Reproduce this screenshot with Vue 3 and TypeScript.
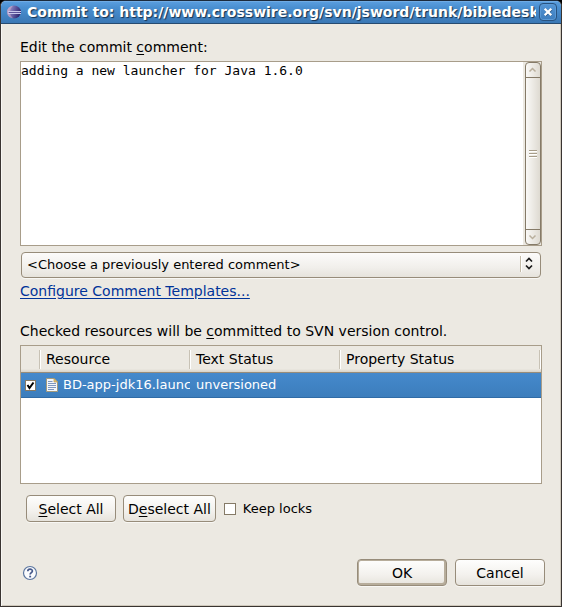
<script setup lang="ts">
import { ref } from 'vue'

interface Resource {
  name: string
  textStatus: string
  propertyStatus: string
  checked: boolean
}

const comment = ref<string>('adding a new launcher for Java 1.6.0')
const previous = ref<string>('')
const keepLocks = ref<boolean>(false)
const resources = ref<Resource[]>([
  { name: 'BD-app-jdk16.launch', textStatus: 'unversioned', propertyStatus: '', checked: true },
])

function setAll(checked: boolean): void {
  resources.value.forEach((r) => (r.checked = checked))
}
</script>

<template>
  <div class="dialog">
    <header class="titlebar">
      <svg class="logo" viewBox="0 0 16 16" aria-hidden="true">
        <defs>
          <linearGradient id="orb" x1="0" y1="0" x2="1" y2="0.3">
            <stop offset="0" stop-color="#c3b0d2" />
            <stop offset="0.5" stop-color="#6f67ab" />
            <stop offset="1" stop-color="#2f2872" />
          </linearGradient>
        </defs>
        <ellipse cx="8" cy="8" rx="7" ry="6.500" fill="url(#orb)" />
        <path d="M1.500 5.500C3 3 5 2 7 1.800C5 3.500 4 6 4 8s.5 4 3 6.200C4 14 2 12.500 1.300 10z" fill="#d5b3cf" opacity=".5" />
        <path d="M2 7.500h13M2 9.500h13" stroke="#c9c8ec" stroke-width="1" />
        <path d="M3 8.500h11" stroke="#5a5298" stroke-width="1" />
      </svg>
      <h1 class="title">Commit to: http://www.crosswire.org/svn/jsword/trunk/bibledesktop</h1>
      <button class="close" type="button" aria-label="Close">
        <svg viewBox="0 0 16 16" aria-hidden="true">
          <path d="M5.500 5.500l6 6M11.500 5.500l-6 6" stroke="#1f4f80" stroke-width="2.400" />
          <path d="M4.700 4.700l6.600 6.600M11.300 4.700l-6.600 6.600" stroke="#fff" stroke-width="2.300" />
        </svg>
      </button>
    </header>

    <main class="content">
      <label class="caption" for="comment">Edit the commit <u>c</u>omment:</label>
      <div class="editor">
        <textarea id="comment" v-model="comment" class="editor-text" spellcheck="false"></textarea>
        <div class="scrollbar" aria-hidden="true">
          <span class="arrow up">
            <svg viewBox="0 0 13 13"><path d="M3.500 8.500l3-3 3 3" /></svg>
          </span>
          <span class="thumb"><i></i><i></i><i></i></span>
          <span class="arrow down">
            <svg viewBox="0 0 13 13"><path d="M3.500 5.500l3 3 3-3" /></svg>
          </span>
        </div>
      </div>

      <div class="combo">
        <select v-model="previous" class="combo-select" aria-label="Previously entered comment">
          <option value="">&lt;Choose a previously entered comment&gt;</option>
        </select>
        <svg class="combo-arrows" viewBox="0 0 18 16" aria-hidden="true">
          <path d="M.5 0v16" stroke="#c3bba9" />
          <path d="M1.500 0v16" stroke="#fff" />
          <path d="M6 5.500l3-3 3 3M6 9.500l3 3 3-3" fill="none" stroke="#1a1a1a" stroke-width="1.700" />
        </svg>
      </div>
      <a class="templates" href="#">Configure Comment Templates...</a>

      <p id="resources-caption" class="caption">Checked resources will be <u>c</u>ommitted to SVN version control.</p>
      <div class="resources">
        <table class="grid" aria-labelledby="resources-caption">
          <colgroup>
            <col class="col-check" />
            <col class="col-status" />
            <col class="col-status" />
            <col />
          </colgroup>
          <thead>
            <tr>
              <th aria-label="Checked"></th>
              <th>Resource</th>
              <th>Text Status</th>
              <th>Property Status</th>
            </tr>
          </thead>
          <tbody>
            <tr v-for="item in resources" :key="item.name">
              <td class="check-cell">
                <span class="tick">
                  <input v-model="item.checked" class="box" type="checkbox" :aria-label="item.name" />
                  <svg v-if="item.checked" class="mark" viewBox="0 0 11 11" aria-hidden="true">
                    <path d="M2.500 5l2 3 4-5.500" fill="none" stroke="#000" stroke-width="2" />
                  </svg>
                </span>
              </td>
              <td>
                <div class="resource">
                  <svg class="file" viewBox="0 0 12 14" aria-hidden="true">
                    <path d="M.5.5h7.500l3.500 3.500v9.500H.5z" fill="#f4f7fb" stroke="#a39a7c" />
                    <path d="M8 .5v3.500h3.500z" fill="#e6c673" stroke="#b99b54" stroke-width=".7" />
                    <path d="M2 3.500h4.500M2 5.500h8M2 7.500h8M2 9.500h8M2 11.500h6" stroke="#7e98bf" />
                  </svg>
                  <span class="name">{{ item.name }}</span>
                </div>
              </td>
              <td>{{ item.textStatus }}</td>
              <td>{{ item.propertyStatus }}</td>
            </tr>
          </tbody>
        </table>
      </div>

      <div class="actions">
        <button class="btn" type="button" @click="setAll(true)"><u>S</u>elect All</button>
        <button class="btn" type="button" @click="setAll(false)">D<u>e</u>select All</button>
        <label class="locks">
          <input v-model="keepLocks" class="box" type="checkbox" />
          <span>Keep locks</span>
        </label>
      </div>
    </main>

    <footer class="footer">
      <button class="help" type="button" aria-label="Help">
        <svg viewBox="0 0 16 16" aria-hidden="true">
          <circle cx="8" cy="8" r="6.500" fill="#fafbfd" stroke="#5b769f" stroke-width="1.200" />
          <path d="M5.800 6.300c0-3 4.600-2.800 4.600-.3C10.400 7.600 8.100 7.700 8.100 9.600" fill="none" stroke="#46598a" stroke-width="1.700" />
          <path d="M7.200 10.700h1.900v1.700H7.200z" fill="#46598a" />
        </svg>
      </button>
      <button class="btn default" type="button">OK</button>
      <button class="btn" type="button">Cancel</button>
    </footer>
  </div>
</template>

<style>
body {
  background: #000;
}
</style>

<style scoped>
.dialog,
.dialog * {
  box-sizing: border-box;
}

.dialog {
  display: flex;
  flex-direction: column;
  min-height: 100vh;
  border: 1px solid #393431;
  border-top-color: #1b2a3c;
  border-radius: 6px 6px 0 0;
  overflow: hidden;
  background: #ece9e2;
  box-shadow: inset 1px 0 #f8f7f4, inset -1px -1px #cfc8bb;
  color: #000;
  font: 14px/16px "DejaVu Sans", sans-serif;
}

.titlebar {
  display: flex;
  align-items: center;
  height: 23px;
  padding: 0 4px 0 5px;
  background: linear-gradient(#5b9fe0, #4a8fd0 30%, #3a78b5);
  border-bottom: 1px solid #274b70;
  box-shadow: inset 0 1px #6fabe4;
}

.logo {
  flex: none;
  width: 16px;
  height: 16px;
}

.title {
  flex: 1;
  min-width: 0;
  margin: 0 3px 0 5px;
  overflow: hidden;
  white-space: nowrap;
  color: #fff;
  font-size: 14px;
  line-height: 20px;
  text-shadow: 1px 1px 1px #16314e;
}

.close {
  flex: none;
  width: 18px;
  height: 18px;
  padding: 0;
  border: 1px solid #28527f;
  border-radius: 4px;
  background: linear-gradient(#5495d5, #3d7dbd);
  box-shadow: inset 0 0 0 1px #5a99d6;
}

.close svg {
  display: block;
  width: 16px;
  height: 16px;
}

.content {
  display: flex;
  flex: 1;
  flex-direction: column;
  padding: 15px 19px 0;
}

.caption {
  margin: 0;
}

u {
  text-decoration: underline;
  text-underline-offset: 2px;
}

.editor {
  display: flex;
  height: 185px;
  margin-top: 6px;
  border: 1px solid #a89d8a;
  background: #ece9e2;
}

.editor-text {
  flex: 1;
  min-width: 0;
  margin: 0 2px 0 0;
  padding: 0;
  border: 0;
  outline: 0;
  resize: none;
  overflow: hidden;
  background: #fff;
  color: #000;
  font: 13px/17px "DejaVu Sans Mono", monospace;
}

.scrollbar {
  display: flex;
  flex-direction: column;
  width: 16px;
  border: 1px solid #857a67;
  border-radius: 4px;
  background: linear-gradient(90deg, #faf9f7, #dedad1);
}

.arrow {
  height: 14px;
}

.arrow svg {
  display: block;
  width: 13px;
  height: 13px;
  fill: none;
  stroke: #b9af9d;
  stroke-width: 1.5;
}

.thumb {
  display: flex;
  flex: 1;
  flex-direction: column;
  align-items: center;
  justify-content: center;
  gap: 2px;
  border: solid #857a67;
  border-width: 1px 0;
}

.thumb i {
  width: 8px;
  height: 1px;
  background: #a79d8a;
  box-shadow: 0 1px #fff;
}

.combo {
  position: relative;
  margin: 6px 1px 0;
}

.combo-select {
  display: block;
  width: 100%;
  height: 26px;
  padding: 0 24px 1px 5px;
  appearance: none;
  border: 1px solid #978c7a;
  border-radius: 4px;
  background: linear-gradient(#fcfbfa, #f1efeb 60%, #e6e3dc);
  box-shadow: 0 1px #f8f7f4;
  color: #000;
  font: inherit;
  font-size: 13px;
}

.combo-arrows {
  position: absolute;
  top: 4px;
  right: 3px;
  width: 18px;
  height: 16px;
  pointer-events: none;
}

.templates {
  align-self: flex-start;
  margin: 5px 0 24px;
  color: #003399;
  text-underline-offset: 2px;
}

.resources {
  height: 139px;
  margin-top: 6px;
  border: 1px solid #a89d8a;
  background: #fff;
}

.grid {
  width: 100%;
  table-layout: fixed;
  border-collapse: separate;
  border-spacing: 0;
}

.col-check {
  width: 20px;
}

.col-status {
  width: 150px;
}

.grid th {
  height: 27px;
  padding: 0 5px;
  background:
    linear-gradient(#c8c2b5, #c8c2b5) right 1px center / 1px 19px no-repeat,
    linear-gradient(#fff, #fff) right center / 1px 19px no-repeat,
    linear-gradient(#ece9e2 88%, #d8d3c8);
  border-bottom: 1px solid #978c7a;
  font-weight: normal;
  text-align: left;
}

.grid td {
  height: 25px;
  padding: 0 1px 0 5px;
  overflow: hidden;
  background: linear-gradient(#4589cc, #3c7dbc);
  border-bottom: 1px solid #2f6ba6;
  color: #fff;
  font-size: 13px;
  white-space: nowrap;
}

.grid .check-cell {
  padding: 0 0 0 4px;
}

.resource {
  display: flex;
  align-items: center;
}

.file {
  flex: none;
  width: 12px;
  height: 14px;
}

.name {
  flex: 1;
  min-width: 0;
  margin-left: 5px;
  overflow: hidden;
}

.box {
  display: block;
  flex: none;
  width: 12px;
  height: 12px;
  margin: 0;
  appearance: none;
  border: 1px solid #857a67;
  background: #fff;
}

.locks .box:checked {
  background: radial-gradient(#000 45%, #fff 50%);
}

.tick {
  display: grid;
  width: 11px;
  height: 11px;
}

.tick .box,
.tick .mark {
  grid-area: 1 / 1;
  width: 11px;
  height: 11px;
}

.mark {
  pointer-events: none;
}

.actions {
  display: flex;
  align-items: center;
  gap: 7px;
  padding: 11px 6px 0;
}

.btn {
  min-width: 90px;
  height: 27px;
  padding: 0 4px;
  border: 1px solid #978c7a;
  border-radius: 4px;
  background: linear-gradient(#fefefd, #f3f1ed 60%, #e6e3dc);
  box-shadow: 0 1px #f8f7f4;
  color: #000;
  font: inherit;
  white-space: nowrap;
}

.btn.default {
  box-shadow: inset 0 0 0 1px #b7ad9b, inset -1px -1px 0 1px #b7ad9b, 0 1px #f8f7f4;
}

.locks {
  display: flex;
  align-items: center;
  gap: 7px;
  margin-left: 1px;
  font-size: 13px;
}

.footer {
  display: flex;
  align-items: center;
  gap: 8px;
  padding: 20px 16px 20px 21px;
}

.help {
  width: 16px;
  height: 16px;
  margin-right: auto;
  padding: 0;
  border: 0;
  background: none;
}

.help svg {
  display: block;
  width: 16px;
  height: 16px;
}
</style>
